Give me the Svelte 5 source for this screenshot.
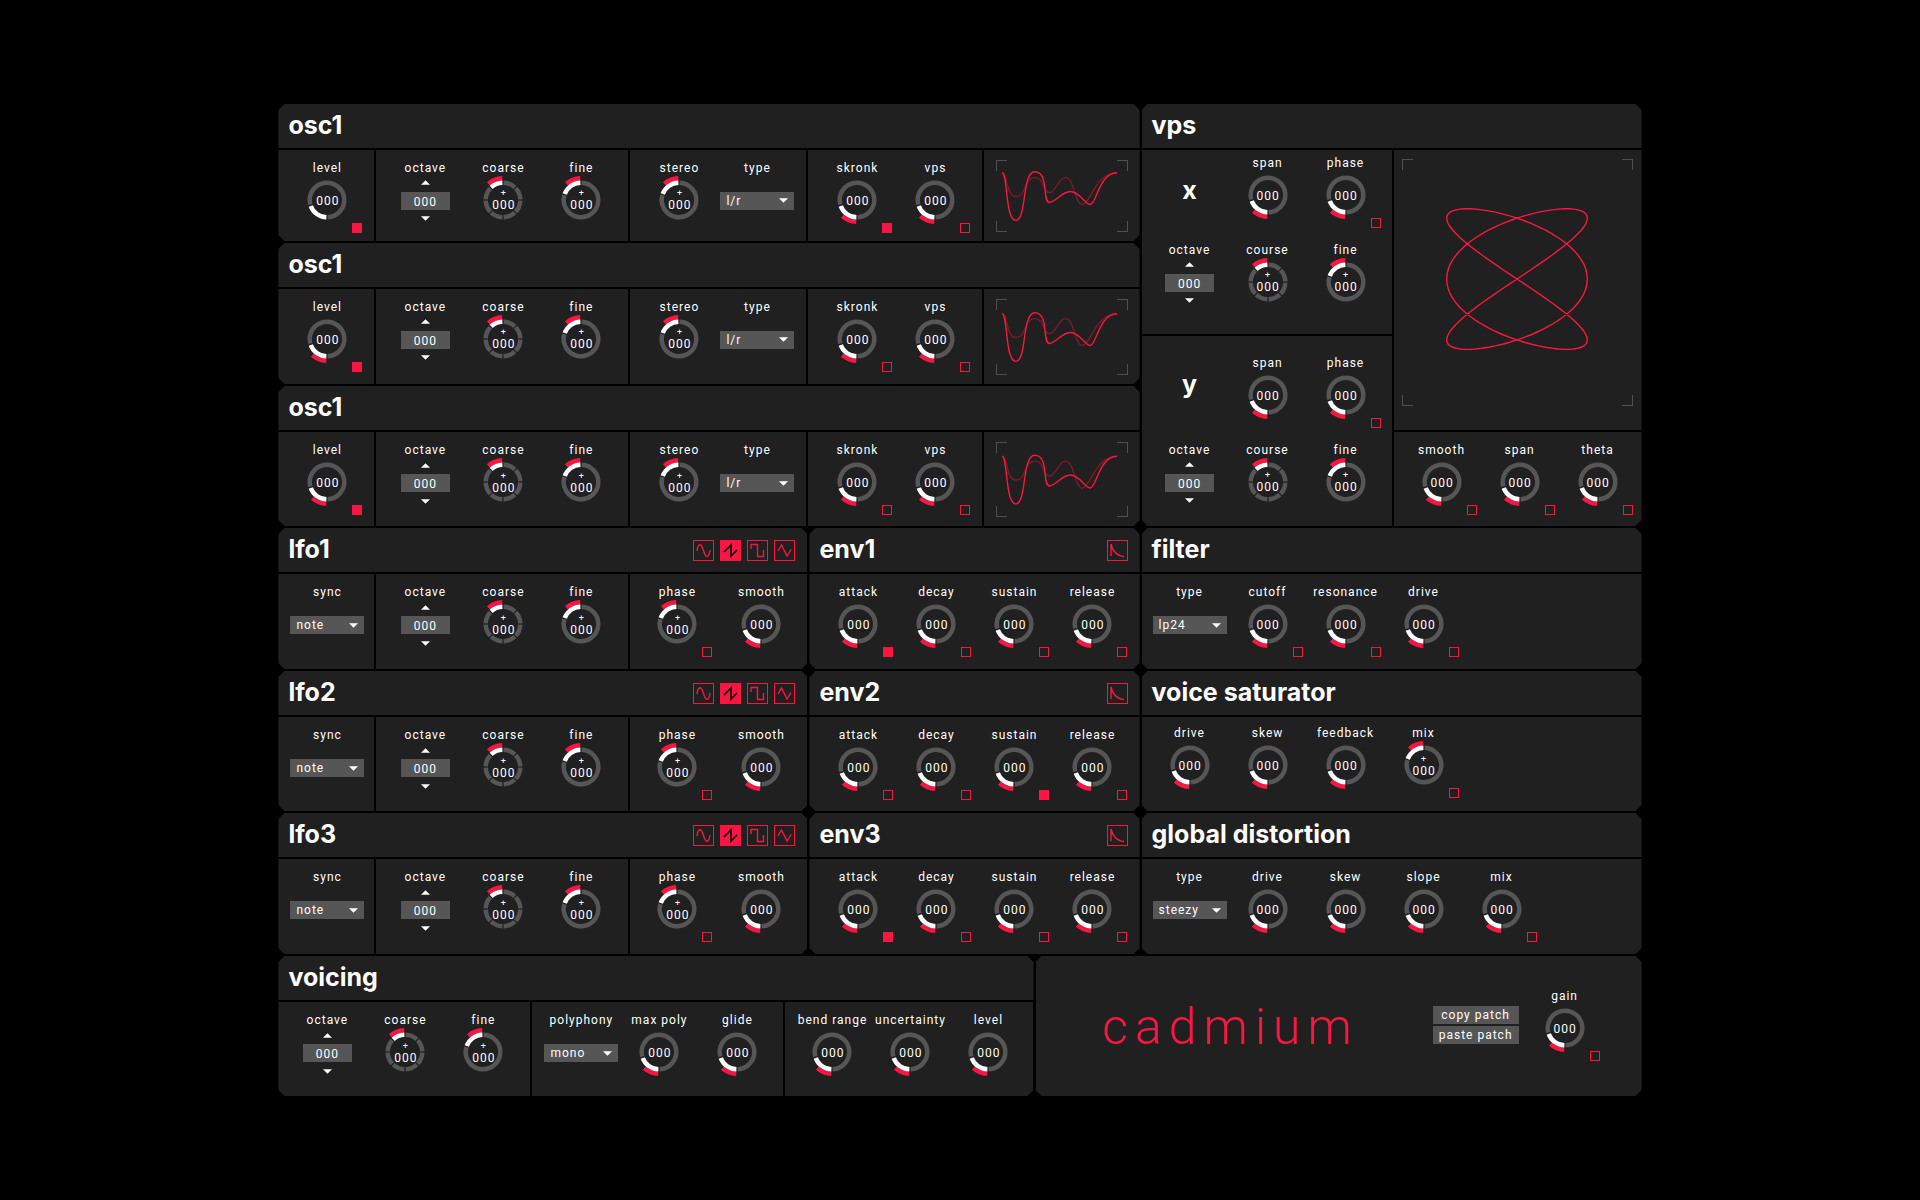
<script>
  const oscillators = [
    { level: { on: true, mod: false }, skronk: true },
    { level: { on: true, mod: true }, skronk: false },
    { level: { on: true, mod: true }, skronk: false },
  ];

  const modulators = [
    { lfo: 'lfo1', env: 'env1', routed: 'attack' },
    { lfo: 'lfo2', env: 'env2', routed: 'sustain' },
    { lfo: 'lfo3', env: 'env3', routed: 'attack' },
  ];

  const stages = ['attack', 'decay', 'sustain', 'release'];

  const waves = [
    { name: 'sine', path: 'M4 11C5 3 8 3 10 9L11 12C13 18 16 18 17 10' },
    { name: 'saw', path: 'M4 12L11 5V16L17 10', active: true },
    { name: 'square', path: 'M4 9V4.5H10.5V16.5H16.5V10' },
    { name: 'triangle', path: 'M4 11L7.5 5L13 16L17 9.5' },
  ];

  // Angles are in degrees, clockwise from twelve o'clock.
  function arc(radius, from, to) {
    const point = (deg) => {
      const a = (deg * Math.PI) / 180;
      return `${(20 + radius * Math.sin(a)).toFixed(2)} ${(20 - radius * Math.cos(a)).toFixed(2)}`;
    };
    return `M${point(from)}A${radius} ${radius} 0 ${to - from > 180 ? 1 : 0} 1 ${point(to)}`;
  }

  const segments = [0, 45, 90, 135, 180, 225, 270].map((a) => arc(17.3, a + 2, a + 43)).join('');

  const rings = {
    uni: { track: arc(17.3, -105, 178), value: arc(17.3, 182, 250), mod: arc(21.8, 182, 222) },
    bi: { track: arc(17.3, 2, 286), value: arc(17.3, -70, -2), mod: arc(21.8, -42, -2) },
    step: { track: segments, value: arc(17.3, -43, -2), mod: arc(21.8, -42, -2) },
  };

  const lissajous = Array.from({ length: 181 }, (_, i) => {
    const t = (i * 2 * Math.PI) / 180;
    return `${(114.5 + 70 * Math.cos(3 * t)).toFixed(1)},${(119.5 + 70 * Math.sin(2 * t)).toFixed(1)}`;
  }).join(' ');
</script>

{#snippet knob(name, kind = 'uni', tick = null, mod = true)}
  <div class="cell">
    <label class="control">
      <span class="name">{name}</span>
      <span class="dial">
        <svg class="ring" viewBox="0 0 40 40" aria-hidden="true">
          <path class="track" d={rings[kind].track} />
          {#if mod}<path class="mod" d={rings[kind].mod} />{/if}
          <path class="value" d={rings[kind].value} />
        </svg>
        {#if kind === 'uni'}
          <span class="digits">000</span>
        {:else}
          <span class="digits signed"><span class="sign">+</span><span>000</span></span>
        {/if}
        <input class="range" type="range" min="0" max="127" value="0" />
      </span>
    </label>
    {#if tick !== null}
      <input class="tick" type="checkbox" checked={tick} aria-label="modulate {name}" />
    {/if}
  </div>
{/snippet}

{#snippet stepper(name)}
  <div class="cell">
    <span class="name">{name}</span>
    <div class="stepper">
      <button class="step" aria-label="{name} up"><svg viewBox="0 0 8 4"><path d="M0 4L4 0L8 4Z" /></svg></button>
      <input class="number" type="text" value="000" aria-label={name} />
      <button class="step" aria-label="{name} down"><svg viewBox="0 0 8 4"><path d="M0 0L4 4L8 0Z" /></svg></button>
    </div>
  </div>
{/snippet}

{#snippet picker(name, value)}
  <div class="cell">
    <label class="control">
      <span class="name">{name}</span>
      <span class="picker">
        <select><option>{value}</option></select>
        <svg viewBox="0 0 8 4" aria-hidden="true"><path d="M0 0L4 4L8 0Z" /></svg>
      </span>
    </label>
  </div>
{/snippet}

{#snippet pitch(coarse = 'coarse')}
  {@render stepper('octave')}
  {@render knob(coarse, 'step')}
  {@render knob('fine', 'bi')}
{/snippet}

{#snippet corners()}
  <i class="corner tl"></i><i class="corner tr"></i><i class="corner bl"></i><i class="corner br"></i>
{/snippet}

<main class="page">
  <div class="synth">
    <div class="modules">
      {#each oscillators as osc}
        <section class="panel osc">
          <header><h2>osc1</h2></header>
          <div class="body osc-body">
            <div class="group">{@render knob('level', 'uni', osc.level.on, osc.level.mod)}</div>
            <div class="group">{@render pitch()}</div>
            <div class="group">
              {@render knob('stereo', 'bi')}
              {@render picker('type', 'l/r')}
            </div>
            <div class="group">
              {@render knob('skronk', 'uni', osc.skronk)}
              {@render knob('vps', 'uni', false)}
            </div>
            <div class="group screen">
              <div class="scope">
                {@render corners()}
                <svg viewBox="0 0 132 71" aria-label="waveform">
                  <path class="ghost" d="M6 12C12 12 10 36 20 36C31 36 28 17 39 17C50 17 46 32 54 32C60 32 63 17 70 17C79 17 79 44 87 44C95 44 100 12 122 12" />
                  <path d="M6 12C12 12 9 60 20 60C31 60 26 11 39 11C54 11 46 42 54 42C60 42 66 31 75 31C84 31 90 44 95 44C101 44 104 12 122 12" />
                </svg>
              </div>
            </div>
          </div>
        </section>
      {/each}

      <section class="panel vps">
        <header><h2>vps</h2></header>
        <div class="body vps-body">
          <div class="stack">
            {#each ['x', 'y'] as axis}
              <div class="group axis axis-{axis}">
                <h3>{axis}</h3>
                {@render knob('span')}
                {@render knob('phase', 'uni', false)}
                {@render pitch('course')}
              </div>
            {/each}
          </div>
          <div class="stack">
            <div class="group screen plot">
              <div class="scope">
                {@render corners()}
                <svg viewBox="0 0 230 246" aria-label="phase plot"><polyline points={lissajous} /></svg>
              </div>
            </div>
            <div class="group shape">
              {@render knob('smooth', 'uni', false)}
              {@render knob('span', 'uni', false)}
              {@render knob('theta', 'uni', false)}
            </div>
          </div>
        </div>
      </section>

      {#each modulators as m}
        <section class="panel lfo">
          <header>
            <h2>{m.lfo}</h2>
            <div class="waves">
              {#each waves as w}
                <button class="shape-button" class:active={w.active} aria-label={w.name}>
                  <svg viewBox="0 0 21 21"><path d={w.path} /></svg>
                </button>
              {/each}
            </div>
          </header>
          <div class="body lfo-body">
            <div class="group">{@render picker('sync', 'note')}</div>
            <div class="group">{@render pitch()}</div>
            <div class="group tight spaced">
              {@render knob('phase', 'bi', false)}
              {@render knob('smooth')}
            </div>
          </div>
        </section>

        <section class="panel env">
          <header>
            <h2>{m.env}</h2>
            <div class="waves">
              <button class="shape-button" aria-label="curve">
                <svg viewBox="0 0 21 21"><path d="M4 16V4C5 9 9 16 17 16.5" /></svg>
              </button>
            </div>
          </header>
          <div class="body">
            <div class="group">
              {#each stages as stage}{@render knob(stage, 'uni', m.routed === stage)}{/each}
            </div>
          </div>
        </section>
      {/each}

      <section class="panel fx filter">
        <header><h2>filter</h2></header>
        <div class="body">
          <div class="group">
            {@render picker('type', 'lp24')}
            {@render knob('cutoff', 'uni', false)}
            {@render knob('resonance', 'uni', false)}
            {@render knob('drive', 'uni', false)}
          </div>
        </div>
      </section>

      <section class="panel fx saturator">
        <header><h2>voice saturator</h2></header>
        <div class="body">
          <div class="group">
            {@render knob('drive')}
            {@render knob('skew')}
            {@render knob('feedback')}
            {@render knob('mix', 'bi', false)}
          </div>
        </div>
      </section>

      <section class="panel fx distortion">
        <header><h2>global distortion</h2></header>
        <div class="body">
          <div class="group">
            {@render picker('type', 'steezy')}
            {@render knob('drive')}
            {@render knob('skew')}
            {@render knob('slope')}
            {@render knob('mix', 'uni', false)}
          </div>
        </div>
      </section>
    </div>

    <div class="bottom">
      <section class="panel">
        <header><h2>voicing</h2></header>
        <div class="body voicing-body">
          <div class="group">{@render pitch()}</div>
          <div class="group">
            {@render picker('polyphony', 'mono')}
            {@render knob('max poly')}
            {@render knob('glide')}
          </div>
          <div class="group tight">
            {@render knob('bend range')}
            {@render knob('uncertainty')}
            {@render knob('level')}
          </div>
        </div>
      </section>

      <section class="panel brand">
        <h1>cadmium</h1>
        <div class="patch">
          <button>copy patch</button>
          <button>paste patch</button>
        </div>
        {@render knob('gain', 'uni', false)}
      </section>
    </div>
  </div>
</main>

<style>
  :global(body) {
    background: #000;
  }

  .page {
    --surface: #202020;
    --grey: #565656;
    --red: #fb1542;
    display: flex;
    align-items: center;
    justify-content: center;
    min-height: 100vh;
    color: #fff;
    font: 12px/16px Roboto, 'Liberation Sans', sans-serif;
    letter-spacing: 1px;
  }

  .synth {
    display: flex;
    flex-direction: column;
    gap: 2px;
    width: 71%;
    min-width: 1360px;
    max-width: 1560px;
  }

  .modules {
    display: grid;
    grid-template-columns: 529fr 330fr 500fr;
    grid-template-rows: minmax(137px, auto) repeat(2, minmax(141px, auto) minmax(140px, auto)) minmax(141px, auto);
    gap: 2px;
  }

  .bottom {
    display: grid;
    grid-template-columns: 755fr 606fr;
    grid-template-rows: minmax(140px, auto);
    gap: 2px;
  }

  .panel {
    display: flex;
    flex-direction: column;
    gap: 2px;
    clip-path: polygon(6px 0, calc(100% - 6px) 0, 100% 6px, 100% calc(100% - 6px), calc(100% - 6px) 100%, 6px 100%, 0 calc(100% - 6px), 0 6px);
  }

  .osc {
    grid-column: 1 / 3;
  }

  .lfo {
    grid-column: 1;
  }

  .env {
    grid-column: 2;
  }

  .vps {
    grid-column: 3;
    grid-row: 1 / 4;
  }

  .fx {
    grid-column: 3;
  }

  .filter {
    grid-row: 4;
  }

  .saturator {
    grid-row: 5;
  }

  .distortion {
    grid-row: 6;
  }

  header {
    display: flex;
    align-items: center;
    justify-content: space-between;
    height: 44px;
    padding: 0 12px 0 10px;
    box-sizing: border-box;
    background: var(--surface);
  }

  h2,
  h3 {
    margin: 0;
    font-family: Inter, Roboto, sans-serif;
    font-size: 25px;
    line-height: 44px;
    font-weight: 700;
    letter-spacing: 0;
  }

  h2 {
    padding-bottom: 2px;
  }

  .body {
    display: grid;
    grid-template-columns: 1fr;
    flex: 1;
    gap: 2px;
  }

  .osc-body {
    grid-template-columns: 96fr 252fr 176fr 174fr 155fr;
  }

  .lfo-body {
    grid-template-columns: 96fr 252fr 177fr;
  }

  .voicing-body {
    grid-template-columns: 252fr 251fr 248fr;
  }

  .vps-body {
    grid-template-columns: 250fr 248fr;
  }

  .stack {
    display: flex;
    flex-direction: column;
    gap: 2px;
  }

  .group {
    display: flex;
    align-items: flex-start;
    padding: 10px 0 8px 10px;
    background: var(--surface);
  }

  .tight {
    padding-left: 8px;
  }

  .fx .group,
  .shape {
    padding-left: 9px;
  }

  .saturator .group {
    padding-top: 8px;
  }

  .spaced {
    gap: 6px;
  }

  .axis {
    display: grid;
    grid-template-columns: repeat(3, 78px);
    align-content: start;
    row-gap: 14px;
    padding-left: 9px;
  }

  .axis-x {
    padding-top: 5px;
    padding-bottom: 19px;
  }

  .axis-y {
    flex: 1;
    padding-top: 19px;
  }

  h3 {
    align-self: center;
    padding-bottom: 2px;
    text-align: center;
  }

  .axis-y h3 {
    padding-bottom: 14px;
  }

  .plot {
    flex: 1;
  }

  .shape {
    padding-bottom: 11px;
  }

  .screen {
    padding: 10px 12px 9px;
  }

  .plot.screen {
    padding: 9px 9px 24px 8px;
  }

  .cell {
    display: flex;
    flex-direction: column;
    align-items: center;
    width: 78px;
    min-height: 73px;
  }

  .control {
    display: flex;
    flex-direction: column;
    align-items: center;
  }

  .name {
    white-space: nowrap;
    line-height: 16px;
  }

  .dial {
    display: grid;
    place-items: center;
    width: 40px;
    height: 40px;
    margin-top: 4px;
  }

  .dial > * {
    grid-area: 1 / 1;
  }

  .ring {
    display: block;
    width: 40px;
    height: 40px;
    overflow: visible;
    fill: none;
    stroke-width: 4.5;
  }

  .track {
    stroke: var(--grey);
  }

  .value {
    stroke: #fff;
  }

  .mod {
    stroke: var(--red);
  }

  .digits {
    padding: 2px 0 0 1px;
  }

  .signed {
    display: flex;
    flex-direction: column;
    align-items: center;
    line-height: 14px;
    padding-top: 1px;
  }

  .sign {
    font-size: 9px;
    line-height: 10px;
  }

  .range {
    width: 40px;
    height: 40px;
    margin: 0;
    opacity: 0;
    cursor: pointer;
  }

  .tick {
    appearance: none;
    align-self: flex-end;
    width: 10px;
    height: 10px;
    margin: 3px 4px 0 0;
    border: 1px solid var(--red);
    border-radius: 0;
  }

  .tick:checked {
    background: var(--red);
  }

  .stepper {
    display: flex;
    flex-direction: column;
    align-items: center;
    gap: 6px;
    margin-top: 4px;
  }

  .step {
    display: flex;
    align-items: center;
    justify-content: center;
    width: 20px;
    height: 6px;
    padding: 0;
    border: 0;
    background: none;
  }

  .step svg,
  .picker svg {
    width: 9px;
    height: 5px;
    fill: #fff;
  }

  .number {
    width: 49px;
    height: 18px;
    box-sizing: border-box;
    padding: 2px 0 0;
    border: 0;
    background: var(--grey);
    color: inherit;
    font: inherit;
    letter-spacing: inherit;
    text-align: center;
  }

  .picker {
    display: grid;
    align-items: center;
    margin-top: 16px;
  }

  .picker > * {
    grid-area: 1 / 1;
  }

  .picker svg {
    justify-self: end;
    margin-right: 6px;
    pointer-events: none;
  }

  select {
    appearance: none;
    width: 74px;
    height: 18px;
    padding: 0 18px 0 6px;
    border: 0;
    border-radius: 0;
    background: var(--grey);
    color: inherit;
    font: inherit;
    letter-spacing: inherit;
  }

  .waves {
    display: flex;
    gap: 6px;
  }

  .shape-button {
    width: 21px;
    height: 21px;
    padding: 0;
    border: 0;
    outline: 1px solid var(--red);
    outline-offset: -1px;
    background: none;
  }

  .shape-button svg {
    display: block;
    fill: none;
    stroke: var(--red);
    stroke-width: 1.4;
  }

  .shape-button.active {
    background: var(--red);
  }

  .shape-button.active svg {
    stroke: #000;
    stroke-width: 1.6;
  }

  .scope {
    display: grid;
    flex: 1;
    align-self: stretch;
  }

  .scope > * {
    grid-area: 1 / 1;
  }

  .scope svg {
    width: 100%;
    height: 100%;
    fill: none;
    stroke: var(--red);
    stroke-width: 1.4;
  }

  .ghost {
    opacity: 0.4;
  }

  .corner {
    width: 10px;
    height: 10px;
    border: 0 solid #505050;
  }

  .tl {
    border-width: 1px 0 0 1px;
  }

  .tr {
    justify-self: end;
    border-width: 1px 1px 0 0;
  }

  .bl {
    align-self: end;
    border-width: 0 0 1px 1px;
  }

  .br {
    place-self: end;
    border-width: 0 1px 1px 0;
  }

  .brand {
    flex-direction: row;
    align-items: center;
    gap: 7px;
    padding: 0 38px 3px 0;
    background: var(--surface);
  }

  h1 {
    flex: 1;
    margin: 0;
    padding-top: 4px;
    color: var(--red);
    font-size: 50px;
    line-height: 60px;
    font-weight: 300;
    letter-spacing: 7px;
    text-align: center;
  }

  .patch {
    display: flex;
    flex-direction: column;
    gap: 2px;
  }

  .patch button {
    width: 86px;
    height: 18px;
    padding: 0;
    border: 0;
    background: var(--grey);
    color: inherit;
    font: inherit;
    letter-spacing: inherit;
  }
</style>
